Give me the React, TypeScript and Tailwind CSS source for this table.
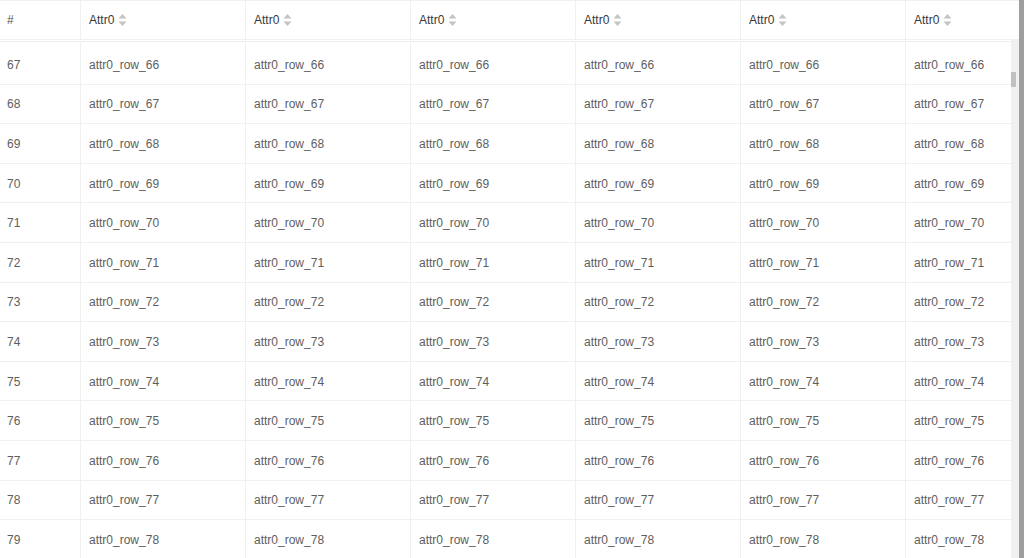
import React from "react";

const rows = Array.from({ length: 13 }, (_, i) => 67 + i);
const dataCols = [0, 1, 2, 3, 4, 5];
const gridCls = "grid grid-cols-[81px_165px_165px_165px_165px_165px_1fr]";

function SortIcon() {
  return (
    <svg width="9" height="14" viewBox="0 0 9 14" className="ml-[4px]">
      <polygon points="4.5,1 8.5,5.5 0.5,5.5" fill="#c4c4c4" />
      <polygon points="0.5,8.5 8.5,8.5 4.5,13" fill="#c4c4c4" />
    </svg>
  );
}

export default function App() {
  return (
    <div
      className="flex h-[558px] w-[1024px] overflow-hidden bg-white text-[12px]"
      style={{ fontFamily: '"Liberation Sans", Arial, sans-serif' }}
    >
      <div className="flex min-w-0 flex-1 flex-col">
        <div className={`${gridCls} h-[40px] border-t border-b border-[#f0f0f0] text-[#383838]`}>
          <div className="flex items-center border-r border-[#f0f0f0] pl-[7px] text-[#555]">#</div>
          {dataCols.map((c) => (
            <div
              key={c}
              className={`flex items-center pl-[8px] ${c < 5 ? "border-r border-[#f0f0f0]" : ""}`}
            >
              <span>Attr0</span>
              <SortIcon />
            </div>
          ))}
        </div>
        <div className="flex min-h-0 flex-1">
          <div className="min-w-0 flex-1 overflow-hidden">
            <div className={`${gridCls} mt-[1px] h-[4px] border-t border-[#f0f0f0]`}>
              <div className="border-r border-[#f0f0f0]" />
              {dataCols.map((c) => (
                <div key={c} className={c < 5 ? "border-r border-[#f0f0f0]" : ""} />
              ))}
            </div>
            {rows.map((r) => (
              <div
                key={r}
                className={`${gridCls} h-[39.6px] border-b border-[#f0f0f0] text-[#5e5e5e]`}
              >
                <div className="flex items-center border-r border-[#f0f0f0] pl-[7px] pt-[1px]">{r}</div>
                {dataCols.map((c) => (
                  <div
                    key={c}
                    className={`flex items-center pl-[8px] pt-[1px] ${c < 5 ? "border-r border-[#f0f0f0]" : ""}`}
                  >
                    attr0_row_{r - 1}
                  </div>
                ))}
              </div>
            ))}
          </div>
          <div className="w-[8px] bg-[#f1f1f1]">
            <div className="mt-[32px] h-[15px] w-[5px] bg-[#c1c1c1]" />
          </div>
        </div>
      </div>
      <div className="w-[5px] bg-[#9e9e9e]" />
    </div>
  );
}
